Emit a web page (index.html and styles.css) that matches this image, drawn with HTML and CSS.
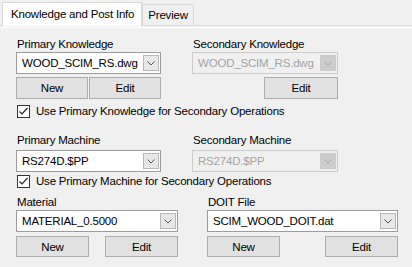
FILE: index.html
```html
<!DOCTYPE html>
<html lang="en">
<head>
  <meta charset="UTF-8" />
  <title>Knowledge and Post Info</title>
  <link rel="stylesheet" href="styles.css">
</head>
<body>
  <div class="tabs">
    <div class="tab active">Knowledge and Post Info</div>
    <div class="tab">Preview</div>
  </div>

  <div class="page">
    <div class="row row-knowledge">
      <div class="field col-left">
        <div class="label">Primary Knowledge</div>
        <div class="combo">
          <span class="value">WOOD_SCIM_RS.dwg</span>
          <span class="arrow"><svg width="8" height="5" viewBox="0 0 8 5"><polyline points="0.5,0.5 4,4 7.5,0.5" fill="none" stroke="currentColor" stroke-width="1"/></svg></span>
        </div>
        <div class="buttons joined">
          <button class="btn">New</button>
          <button class="btn">Edit</button>
        </div>
      </div>
      <div class="field col-right">
        <div class="label">Secondary Knowledge</div>
        <div class="combo disabled">
          <span class="value">WOOD_SCIM_RS.dwg</span>
          <span class="arrow"><svg width="8" height="5" viewBox="0 0 8 5"><polyline points="0.5,0.5 4,4 7.5,0.5" fill="none" stroke="currentColor" stroke-width="1"/></svg></span>
        </div>
        <div class="buttons end">
          <button class="btn btn-edit-sec">Edit</button>
        </div>
      </div>
    </div>

    <div class="check check-knowledge">
      <span class="box"><svg width="11" height="11" viewBox="0 0 11 11"><polyline points="1.5,5.5 4,8 9.5,2" fill="none" stroke="#222" stroke-width="1.2"/></svg></span>
      Use Primary Knowledge for Secondary Operations
    </div>

    <div class="row row-machine">
      <div class="field col-left">
        <div class="label">Primary Machine</div>
        <div class="combo">
          <span class="value">RS274D.$PP</span>
          <span class="arrow"><svg width="8" height="5" viewBox="0 0 8 5"><polyline points="0.5,0.5 4,4 7.5,0.5" fill="none" stroke="currentColor" stroke-width="1"/></svg></span>
        </div>
      </div>
      <div class="field col-right">
        <div class="label">Secondary Machine</div>
        <div class="combo disabled">
          <span class="value">RS274D.$PP</span>
          <span class="arrow"><svg width="8" height="5" viewBox="0 0 8 5"><polyline points="0.5,0.5 4,4 7.5,0.5" fill="none" stroke="currentColor" stroke-width="1"/></svg></span>
        </div>
      </div>
    </div>

    <div class="check check-machine">
      <span class="box"><svg width="11" height="11" viewBox="0 0 11 11"><polyline points="1.5,5.5 4,8 9.5,2" fill="none" stroke="#222" stroke-width="1.2"/></svg></span>
      Use Primary Machine for Secondary Operations
    </div>

    <div class="row row-material">
      <div class="field col-material">
        <div class="label">Material</div>
        <div class="combo">
          <span class="value">MATERIAL_0.5000</span>
          <span class="arrow"><svg width="8" height="5" viewBox="0 0 8 5"><polyline points="0.5,0.5 4,4 7.5,0.5" fill="none" stroke="currentColor" stroke-width="1"/></svg></span>
        </div>
        <div class="buttons spread">
          <button class="btn">New</button>
          <button class="btn">Edit</button>
        </div>
      </div>
      <div class="field col-doit">
        <div class="label">DOIT File</div>
        <div class="combo">
          <span class="value">SCIM_WOOD_DOIT.dat</span>
          <span class="arrow"><svg width="8" height="5" viewBox="0 0 8 5"><polyline points="0.5,0.5 4,4 7.5,0.5" fill="none" stroke="currentColor" stroke-width="1"/></svg></span>
        </div>
        <div class="buttons spread">
          <button class="btn">New</button>
          <button class="btn">Edit</button>
        </div>
      </div>
    </div>
  </div>
</body>
</html>
```

FILE: styles.css
```css
body {
  margin: 0;
  font-family: 'Liberation Sans', Arial, sans-serif;
  font-size: 11.5px;
  letter-spacing: -0.2px;
  color: #000;
  background: #f0f0f0;
  height: 267px;
  overflow: hidden;
}

/* tab strip */
.tabs {
  display: flex;
  align-items: flex-end;
  height: 25px;
  padding-left: 2px;
  border-bottom: 1px solid #d9d9d9;
}

.tab {
  height: 20px;
  line-height: 20px;
  padding: 0 5px 0 5px;
  border: 1px solid #d9d9d9;
  border-bottom: none;
  background: #f0f0f0;
}

.tab.active {
  height: 23px;
  line-height: 22px;
  padding: 0 7px 0 8px;
  background: #fff;
  margin-bottom: -1px;
  position: relative;
}

/* page content */
.page {
  padding: 9px 0 0 16px;
  border-top: 1px solid #fff;
  margin-top: 1px;
}

.row {
  display: flex;
}

.field {
  display: flex;
  flex-direction: column;
}

.col-left { width: 145px; }
.col-right { width: 146px; margin-left: 31px; }
.col-material { width: 162px; }
.col-doit { width: 191px; margin-left: 29px; }

.label {
  height: 15px;
  line-height: 15px;
  padding-left: 1px;
}

.combo {
  display: flex;
  align-items: center;
  height: 22px;
  box-sizing: border-box;
  border: 1px solid #9c9c9c;
  background: #fff;
  padding: 0 1px 0 5px;
}

.combo .value {
  flex: 1;
  white-space: nowrap;
  overflow: hidden;
}

.combo .arrow {
  width: 16px;
  height: 16px;
  box-sizing: border-box;
  border: 1px solid #b7b7b7;
  background: #e8e8e8;
  color: #555;
  display: flex;
  align-items: center;
  justify-content: center;
}

.combo.disabled {
  border-color: #cccccc;
  background: #f0f0f0;
  color: #a3a3a3;
}

.combo.disabled .arrow {
  border-color: #cccccc;
  background: #cccccc;
  color: #a8a8a8;
}

.buttons {
  display: flex;
  margin-top: 3px;
}

.buttons.end { justify-content: flex-end; }
.buttons.spread { justify-content: space-between; }

.btn {
  height: 22px;
  width: 72px;
  box-sizing: border-box;
  border: 1px solid #adadad;
  background: #e1e1e1;
  font: inherit;
  letter-spacing: inherit;
  color: #000;
  padding: 0;
}

.joined .btn + .btn { margin-left: 1px; }
.btn-edit-sec { width: 74px; }

.check {
  display: flex;
  align-items: center;
  height: 15px;
  line-height: 15px;
}

.check .box {
  width: 13px;
  height: 13px;
  box-sizing: border-box;
  border: 1px solid #333;
  background: #fff;
  margin: 0 6px 0 1px;
  display: flex;
  align-items: center;
  justify-content: center;
}

.check-knowledge { margin-top: 5px; }
.row-machine { margin-top: 14px; }
.row-machine .label { height: 17px; }
.check-machine { margin-top: 2px; }
.row-material { margin-top: 6px; }
.row-material .buttons { margin-top: 4px; }
.row-material .btn { height: 21px; width: 73px; }
```
